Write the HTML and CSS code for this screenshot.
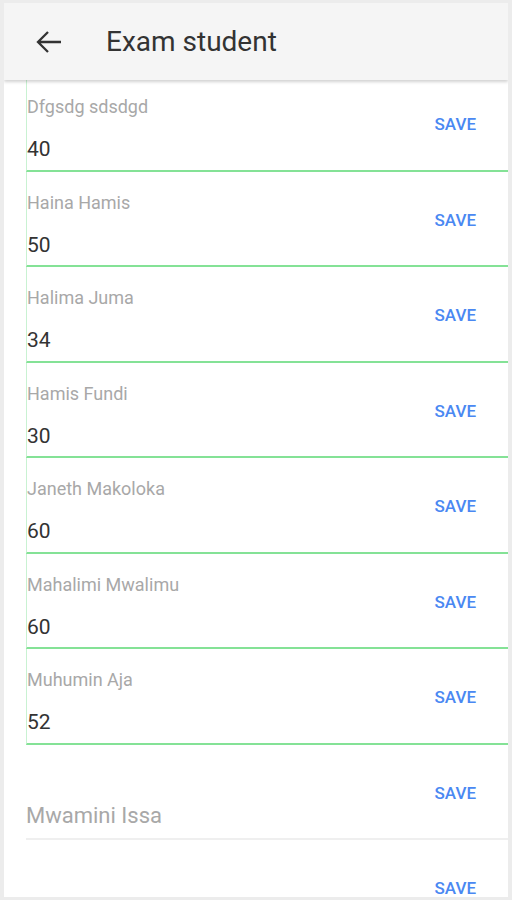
FILE: index.html
```html
<!DOCTYPE html>
<html>
<head>
<meta charset="utf-8">
<link rel="stylesheet" href="styles.css">
</head>
<body>
<div class="screen">
  <header class="appbar">
    <button class="back" aria-label="Back">
      <svg width="28" height="24" viewBox="0 0 28 24"><path d="M2 12H25M12 2L2 12L12 22" fill="none" stroke="#333" stroke-width="2.3"/></svg>
    </button>
    <h1 class="title">Exam student</h1>
  </header>
  <main class="list">
    <div class="row filled"><div class="field"><div class="label">Dfgsdg sdsdgd</div><div class="value">40</div></div><button class="save">SAVE</button></div>
    <div class="row filled"><div class="field"><div class="label">Haina Hamis</div><div class="value">50</div></div><button class="save">SAVE</button></div>
    <div class="row filled"><div class="field"><div class="label">Halima Juma</div><div class="value">34</div></div><button class="save">SAVE</button></div>
    <div class="row filled"><div class="field"><div class="label">Hamis Fundi</div><div class="value">30</div></div><button class="save">SAVE</button></div>
    <div class="row filled"><div class="field"><div class="label">Janeth Makoloka</div><div class="value">60</div></div><button class="save">SAVE</button></div>
    <div class="row filled"><div class="field"><div class="label">Mahalimi Mwalimu</div><div class="value">60</div></div><button class="save">SAVE</button></div>
    <div class="row filled"><div class="field"><div class="label">Muhumin Aja</div><div class="value">52</div></div><button class="save">SAVE</button></div>
    <div class="row empty"><div class="field"><div class="label"></div><div class="value placeholder">Mwamini Issa</div></div><button class="save">SAVE</button></div>
    <div class="row empty"><div class="field"><div class="label"></div><div class="value placeholder"></div></div><button class="save">SAVE</button></div>
  </main>
</div>
</body>
</html>
```
FILE: styles.css
```css
html, body {
  margin: 0;
  padding: 0;
  background: #ececec;
  font-family: Roboto, "Noto Sans", sans-serif;
}
.screen {
  margin: 3px 4px 3px 4px;
  height: 894px;
  background: #fff;
  overflow: hidden;
}
.appbar {
  position: relative;
  z-index: 1;
  height: 77px;
  background: #f5f5f5;
  box-shadow: 0 2px 3px rgba(0,0,0,0.18);
  display: flex;
  align-items: center;
}
.back {
  border: 0;
  background: none;
  padding: 0;
  margin-left: 32px;
  width: 28px;
  height: 24px;
  display: flex;
}
.title {
  margin: 0 0 0 42px;
  font-size: 28px;
  font-weight: 400;
  color: #333;
}
.list {
  margin-top: -4px;
}
.row {
  box-sizing: border-box;
  height: 95.5px;
  margin-left: 22px;
  display: flex;
  align-items: flex-start;
}
.row.filled {
  border-left: 1px solid #c9f2d2;
  border-bottom: 2px solid #84e296;
}
.row.empty {
  border-bottom: 2px solid #efefef;
}
.field {
  flex: 1;
  padding-top: 21px;
}
.label {
  height: 20px;
  font-size: 18px;
  line-height: 20px;
  color: #a8a8a8;
}
.value {
  margin-top: 20px;
  height: 24px;
  font-size: 21px;
  line-height: 24px;
  color: #333;
}
.value.placeholder {
  font-size: 22px;
  color: #a8a8a8;
  margin-top: 18px;
}
.save {
  border: 0;
  background: none;
  padding: 38px 32px 0 0;
  font-family: Roboto, sans-serif;
  font-size: 17px;
  line-height: 20px;
  font-weight: 500;
  color: #4a88f2;
}
```
